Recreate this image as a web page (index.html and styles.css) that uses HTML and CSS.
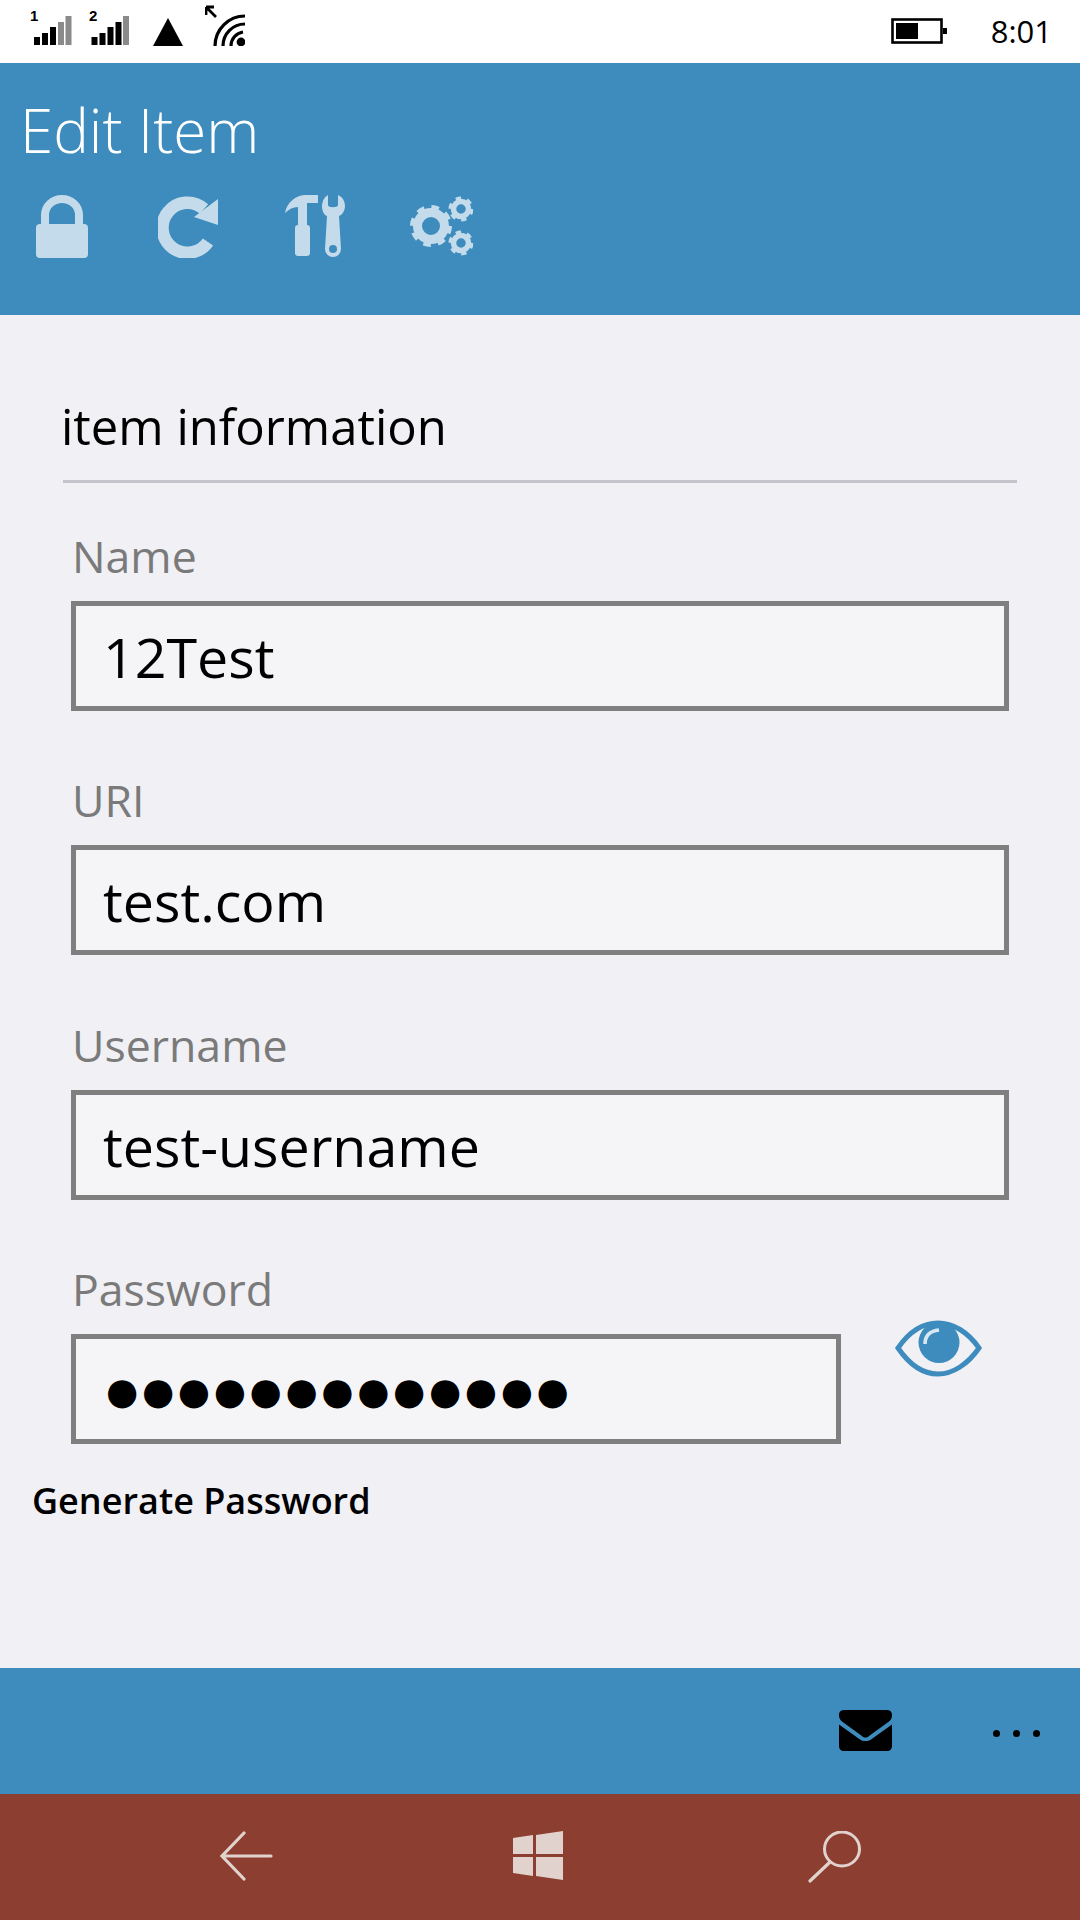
FILE: index.html
```html
<!DOCTYPE html>
<html lang="en">
<head>
    <meta charset="UTF-8">
    <meta name="viewport" content="width=device-width, initial-scale=1.0">
    <title>Edit Item</title>
    <link rel="stylesheet" href="styles.css">
</head>
<body>
    <div class="phone">

        <!-- Status bar -->
        <div class="status-bar">
            <svg class="st-signal" viewBox="0 0 40 40" width="40" height="40">
                <text x="-1" y="15" class="st-num">1</text>
                <rect x="3" y="31" width="6" height="8"/>
                <rect x="11" y="27" width="6" height="12"/>
                <rect x="19" y="21" width="6" height="18"/>
                <rect x="27" y="16" width="6" height="23" fill="#8a8a8a"/>
                <rect x="34.5" y="10" width="6" height="29" fill="#8a8a8a"/>
            </svg>
            <svg class="st-signal st-second" viewBox="0 0 40 40" width="40" height="40">
                <text x="0" y="15" class="st-num">2</text>
                <rect x="2.5" y="31" width="6" height="8"/>
                <rect x="10.5" y="27" width="6" height="12"/>
                <rect x="18.5" y="21" width="6" height="18"/>
                <rect x="26.5" y="16" width="6" height="23"/>
                <rect x="34" y="10" width="6" height="29" fill="#8a8a8a"/>
            </svg>
            <svg class="st-triangle" viewBox="0 0 30 28" width="30" height="28">
                <polygon points="15,0 30,28 0,28"/>
            </svg>
            <svg class="st-wifi" viewBox="0 0 40 41" width="40" height="41">
                <path d="M1 2 L9 2 M1 2 L1 10 M1 2 L11 12" fill="none" stroke="#000" stroke-width="2.8"/>
                <path d="M10 41 A30 30 0 0 1 40 11" fill="none" stroke="#000" stroke-width="3.2"/>
                <path d="M18 41 A22 22 0 0 1 40 19" fill="none" stroke="#000" stroke-width="3.2"/>
                <path d="M26 41 A14 14 0 0 1 38 27" fill="none" stroke="#000" stroke-width="3.2"/>
                <circle cx="36" cy="37" r="4.4"/>
            </svg>
            <div class="st-right">
                <svg class="st-battery" viewBox="0 0 56 26" width="56" height="26">
                    <rect x="1.5" y="1.5" width="49" height="23" fill="none" stroke="#000" stroke-width="2.6"/>
                    <rect x="5" y="5" width="22" height="16"/>
                    <rect x="52" y="10" width="4" height="6"/>
                </svg>
                <span class="st-time">8:01</span>
            </div>
        </div>

        <!-- Cabecera -->
        <div class="header">
            <h1>Edit Item</h1>
            <div class="tabs">
                <svg class="tab-lock" viewBox="0 0 52 63" width="52" height="63">
                    <path d="M9 30 V20 A17 16 0 0 1 43 20 V30" fill="none" stroke="#c3dbea" stroke-width="8"/>
                    <rect x="0" y="29" width="52" height="34" rx="4"/>
                </svg>
                <svg viewBox="0 0 62 64" width="62" height="64">
                    <path d="M46 15 A25 25 0 1 0 50 48" fill="none" stroke="#c3dbea" stroke-width="12.5"/>
                    <polygon points="60,5 60,31 36,23"/>
                </svg>
                <svg viewBox="0 0 62 64" width="62" height="64">
                    <path d="M1 19 C3 8 12 1 22 1 H34 V9 H23 V31 H14 V13 C9 13 5 15 1 19 Z"/>
                    <rect x="11" y="31" width="15" height="31" rx="3"/>
                    <path fill-rule="evenodd" d="M44 1 V11 C44 14 54 14 54 11 V1 C59 3 61 8 61 12 C61 17 58 21 55 22 L57 55 A8 8 0 1 1 41 55 L43 22 C40 21 38 17 38 12 C38 8 40 3 44 1 Z M49 51 A4 4 0 1 0 49 59 A4 4 0 1 0 49 51 Z"/>
                </svg>
                <svg viewBox="0 0 63 60" width="63" height="60">
                    <g fill="none" stroke="#c3dbea">
                        <circle cx="21" cy="30" r="13.5" stroke-width="9"/>
                        <circle cx="21" cy="30" r="18.5" stroke-width="5" stroke-dasharray="7.5 7"/>
                        <circle cx="51" cy="13" r="7.5" stroke-width="5.5"/>
                        <circle cx="51" cy="13" r="10.5" stroke-width="4" stroke-dasharray="5.2 5.8"/>
                        <circle cx="51" cy="47" r="7.5" stroke-width="5.5"/>
                        <circle cx="51" cy="47" r="10.5" stroke-width="4" stroke-dasharray="5.2 5.8"/>
                    </g>
                </svg>
            </div>
        </div>

        <!-- Formulario -->
        <div class="content">
            <div class="section-title">item information</div>

            <div class="field">
                <label>Name</label>
                <div class="input">12Test</div>
            </div>
            <div class="field">
                <label>URI</label>
                <div class="input">test.com</div>
            </div>
            <div class="field">
                <label>Username</label>
                <div class="input">test-username</div>
            </div>
            <div class="field">
                <label>Password</label>
                <div class="password-row">
                    <div class="input input-password">●●●●●●●●●●●●●</div>
                    <svg class="eye" viewBox="0 0 87 57" width="87" height="57">
                        <path d="M3 28 C14 12 28 3 43 3 C58 3 73 12 84 28 C73 44 58 54 43 54 C28 54 14 44 3 28 Z" fill="none" stroke="#3d8cbd" stroke-width="5"/>
                        <circle cx="44" cy="22.5" r="20.5" fill="#3d8cbd"/>
                        <path d="M30 24 C30 16 35 11 44 10" fill="none" stroke="#fff" stroke-opacity="0.8" stroke-width="3.5"/>
                    </svg>
                </div>
            </div>
            <div class="generate">Generate Password</div>
        </div>

        <!-- Barra inferior -->
        <div class="app-bar">
            <svg class="mail" viewBox="0 0 53 41" width="53" height="41">
                <path d="M5 0 H48 C52 0 53 3 53 5 C53 8 52 10 50 11.500 L30 26 C28 28 25 28 23 26 L3 11.500 C1 10 0 8 0 5 C0 3 1 0 5 0 Z"/>
                <path d="M0 14.500 L21 29.500 C24 31.500 29 31.500 32 29.500 L53 14.500 V36 C53 39 51 41 48 41 H5 C2 41 0 39 0 36 Z"/>
            </svg>
            <div class="more"><span></span><span></span><span></span></div>
        </div>

        <!-- Navegación -->
        <div class="nav-bar">
            <svg viewBox="0 0 54 50" width="54" height="50">
                <path d="M24 2 L2 25 L24 48 M2 25 H51" fill="none" stroke="#e2d2ce" stroke-width="3.2" stroke-linecap="round"/>
            </svg>
            <svg viewBox="0 0 50 49" width="50" height="49">
                <polygon points="0,7 20,4 20,23 0,23"/>
                <polygon points="23,4 50,0 50,23 23,23"/>
                <polygon points="0,26 20,26 20,45 0,42"/>
                <polygon points="23,26 50,26 50,49 23,45"/>
            </svg>
            <svg class="nav-search" viewBox="0 0 54 52" width="54" height="52">
                <ellipse cx="34" cy="18" rx="17.5" ry="17" fill="none" stroke="#e2d2ce" stroke-width="3"/>
                <path d="M22 31 L2 50" fill="none" stroke="#e2d2ce" stroke-width="3.2" stroke-linecap="round"/>
            </svg>
        </div>

    </div>
</body>
</html>
```

FILE: styles.css
```css
/* Estilo global */
* {
    margin: 0;
    padding: 0;
    box-sizing: border-box;
}

body {
    font-family: "Open Sans", "Noto Sans", sans-serif;
    background-color: #f0f0f5;
    color: #000;
}

.phone {
    width: 1080px;
    height: 1920px;
    display: flex;
    flex-direction: column;
    overflow: hidden;
}

/* Status bar */
.status-bar {
    height: 63px;
    flex: none;
    background-color: #fff;
    display: flex;
    align-items: flex-end;
    padding: 0 28px 17px 31px;
}

.st-signal {
    overflow: visible;
}

.st-num {
    font-family: "Liberation Sans", sans-serif;
    font-weight: 700;
    font-size: 15px;
}

.st-second {
    margin-left: 18px;
}

.st-triangle {
    margin-left: 24px;
}

.st-wifi {
    margin-left: 22px;
}

.st-right {
    margin-left: auto;
    margin-bottom: -4px;
    display: flex;
    align-items: center;
    gap: 44px;
}

.st-time {
    font-size: 31px;
    line-height: 38px;
}

/* Cabecera */
.header {
    height: 252px;
    flex: none;
    background-color: #3d8cbd;
    padding: 29px 0 0 20px;
}

.header h1 {
    font-size: 60px;
    font-weight: 300;
    line-height: 76px;
    color: #fff;
}

.tabs {
    display: flex;
    align-items: center;
    margin-top: 26px;
    padding-left: 16px;
    gap: 64px;
    fill: #c3dbea;
}

.tab-lock {
    margin-right: 6px;
}

/* Formulario */
.content {
    flex: 1;
    padding: 0 71px 0 32px;
}

.section-title {
    font-size: 49px;
    line-height: 64px;
    margin: 79px 0 0 31px;
    padding-bottom: 22px;
    width: 954px;
    text-indent: -2px;
    border-bottom: 3px solid #c4c4cc;
}

.field {
    margin-left: 39px;
    margin-top: 44px;
}

.field + .field {
    margin-top: 60.3px;
}

label {
    display: block;
    font-size: 44.6px;
    line-height: 58px;
    color: #7a7a7a;
    margin-bottom: 16px;
    padding-left: 1px;
}

.input {
    height: 110px;
    border: 5px solid #7f7f7f;
    background-color: #f5f5f8;
    font-size: 55.5px;
    line-height: 102px;
    padding-left: 27px;
}

.password-row {
    display: flex;
    align-items: flex-start;
}

.input-password {
    width: 770px;
    flex: none;
    font-family: "DejaVu Sans", sans-serif;
    font-size: 37px;
    line-height: 105px;
    letter-spacing: 3.6px;
    padding-left: 30px;
}

.eye {
    margin: -14px 0 0 54px;
}

.generate {
    font-size: 36px;
    font-weight: 600;
    line-height: 48px;
    margin-top: 33px;
}

/* Barra inferior */
.app-bar {
    height: 126px;
    flex: none;
    background-color: #3d8cbd;
    display: flex;
    align-items: flex-start;
    padding: 42px 40px 0 0;
    justify-content: flex-end;
}

.more {
    display: flex;
    gap: 13px;
    margin: 20px 0 0 101px;
}

.more span {
    width: 7px;
    height: 7px;
    border-radius: 50%;
    background-color: #000;
}

/* Navegación */
.nav-bar {
    height: 126px;
    flex: none;
    background-color: #8c3e30;
    fill: #e2d2ce;
    display: flex;
    align-items: flex-start;
    padding: 37px 0 0 220px;
    gap: 239px;
}

.nav-search {
    margin-left: 6px;
}
```
